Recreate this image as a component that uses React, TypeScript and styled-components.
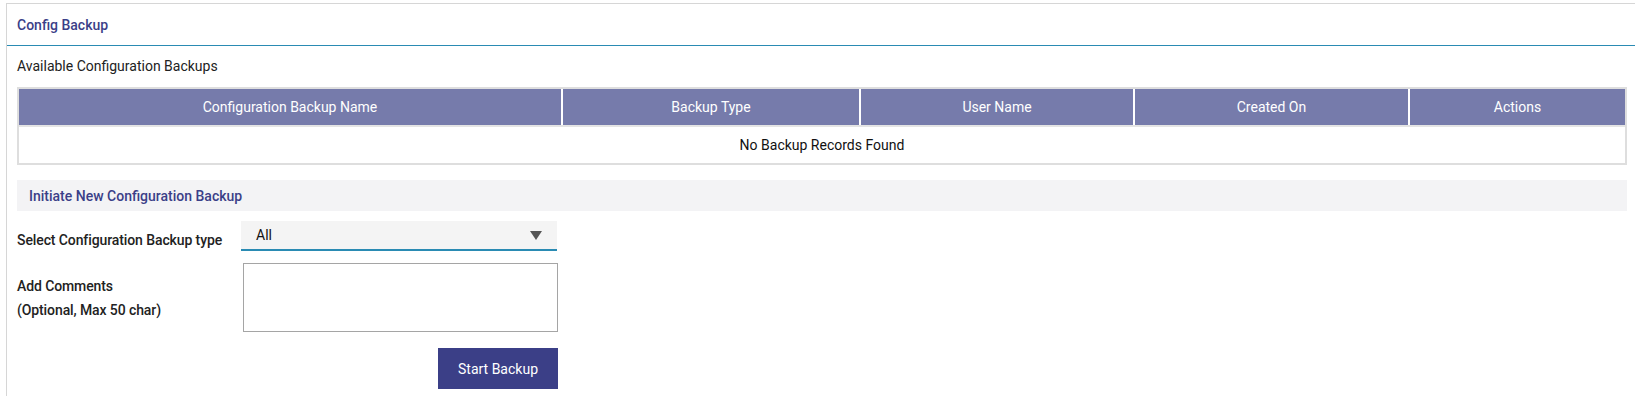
import styled, { createGlobalStyle } from 'styled-components';

const GlobalStyle = createGlobalStyle`
  html, body {
    margin: 0;
    padding: 0;
    background: #ffffff;
    overflow: hidden;
  }
  body {
    font-family: Roboto, "Liberation Sans", Arial, sans-serif;
    color: #222222;
  }
`;

const Panel = styled.div`
  margin: 3px 0 0 6px;
  width: 1632px;
  height: 420px;
  box-sizing: border-box;
  border: 1px solid #d6d6d6;
  background: #ffffff;
`;

const PanelHeader = styled.div`
  height: 41px;
  box-sizing: content-box;
  display: flex;
  align-items: center;
  padding: 0 10px;
  border-bottom: 1px solid #2a8bb3;
  font-size: 14px;
  font-weight: 500;
  color: #3b3f88;
`;

const PanelBody = styled.div`
  padding: 0 10px;
`;

const Caption = styled.div`
  padding: 10px 0 11px;
  line-height: 20px;
  font-size: 14px;
  color: #222222;
`;

const Table = styled.table`
  width: 1610px;
  table-layout: fixed;
  border-collapse: separate;
  border-spacing: 0;
  border: 2px solid #dedede;
  font-size: 14px;
`;

const HeadCell = styled.th<{ $last?: boolean }>`
  height: 36px;
  padding: 0;
  background: #767bab;
  color: #ffffff;
  font-weight: 400;
  text-align: center;
  border-right: ${(p) => (p.$last ? 'none' : '2px solid #ffffff')};
`;

const EmptyCell = styled.td`
  height: 36px;
  padding: 0;
  text-align: center;
  color: #111111;
  border-top: 2px solid #e4e4e4;
`;

const SectionTitle = styled.div`
  margin-top: 15px;
  width: 1610px;
  height: 31px;
  box-sizing: border-box;
  display: flex;
  align-items: center;
  padding-left: 12px;
  background: #f3f3f5;
  font-size: 14px;
  font-weight: 500;
  color: #3b3f88;
`;

const FormRow = styled.div<{ $top: number }>`
  display: flex;
  align-items: flex-start;
  margin-top: ${(p) => p.$top}px;
`;

const Label = styled.div<{ $pad: number }>`
  width: 224px;
  flex-shrink: 0;
  padding-top: ${(p) => p.$pad}px;
  font-size: 14px;
  font-weight: 500;
  letter-spacing: -0.1px;
  line-height: 24px;
  color: #222222;
`;

const SelectBox = styled.div`
  width: 316px;
  height: 30px;
  box-sizing: border-box;
  display: flex;
  align-items: center;
  justify-content: space-between;
  padding: 0 15px;
  background: #f4f4f4;
  border-bottom: 2px solid #2a8bb3;
  font-size: 14px;
  color: #111111;
`;

const Caret = styled.span`
  width: 0;
  height: 0;
  border-left: 6px solid transparent;
  border-right: 6px solid transparent;
  border-top: 9px solid #555555;
`;

const CommentBox = styled.textarea`
  margin-left: 2px;
  width: 315px;
  height: 69px;
  box-sizing: border-box;
  border: 1px solid #a5a5a5;
  resize: none;
  font-family: inherit;
  font-size: 14px;
  padding: 4px 6px;
  outline: none;
`;

const Actions = styled.div`
  width: 541px;
  display: flex;
  justify-content: flex-end;
  margin-top: 16px;
`;

const PrimaryButton = styled.button`
  width: 120px;
  height: 41px;
  border: none;
  background: #3b3f87;
  color: #ffffff;
  font-family: inherit;
  font-size: 14px;
  cursor: pointer;
`;

const columns = [
  { title: 'Configuration Backup Name', width: 544 },
  { title: 'Backup Type', width: 298 },
  { title: 'User Name', width: 274 },
  { title: 'Created On', width: 275 },
  { title: 'Actions', width: 215 },
];

export default function App() {
  return (
    <>
      <GlobalStyle />
      <Panel>
        <PanelHeader>Config Backup</PanelHeader>
        <PanelBody>
          <Caption>Available Configuration Backups</Caption>
          <Table>
            <colgroup>
              {columns.map((c) => (
                <col key={c.title} style={{ width: c.width }} />
              ))}
            </colgroup>
            <thead>
              <tr>
                {columns.map((c, i) => (
                  <HeadCell key={c.title} $last={i === columns.length - 1}>
                    {c.title}
                  </HeadCell>
                ))}
              </tr>
            </thead>
            <tbody>
              <tr>
                <EmptyCell colSpan={5}>No Backup Records Found</EmptyCell>
              </tr>
            </tbody>
          </Table>

          <SectionTitle>Initiate New Configuration Backup</SectionTitle>

          <FormRow $top={10}>
            <Label $pad={7}>Select Configuration Backup type</Label>
            <SelectBox>
              <span>All</span>
              <Caret />
            </SelectBox>
          </FormRow>

          <FormRow $top={11}>
            <Label $pad={11}>
              Add Comments
              <br />
              (Optional, Max 50 char)
            </Label>
            <CommentBox />
          </FormRow>

          <Actions>
            <PrimaryButton>Start Backup</PrimaryButton>
          </Actions>
        </PanelBody>
      </Panel>
    </>
  );
}
